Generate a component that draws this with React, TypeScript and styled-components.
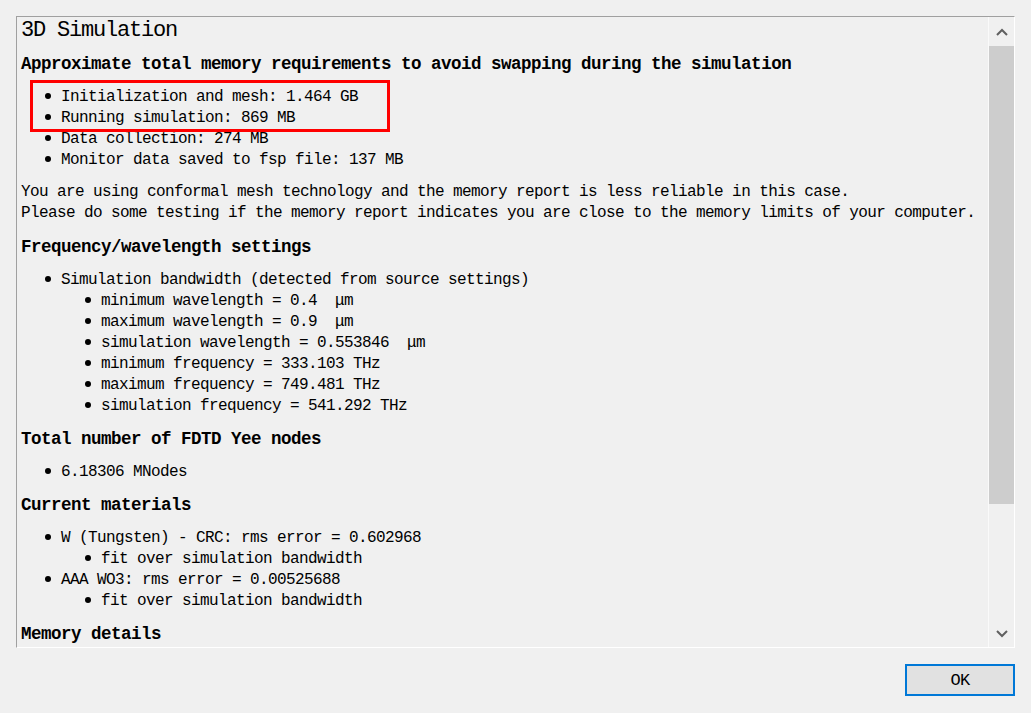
import React from "react";
import styled, { createGlobalStyle } from "styled-components";

const GlobalStyle = createGlobalStyle`
  html, body { margin: 0; padding: 0; background: #f0f0f0; }
  * { box-sizing: border-box; }
`;

const MONO = `"Liberation Mono", "DejaVu Sans Mono", monospace`;

const Dialog = styled.div`
  position: relative;
  width: 1031px;
  height: 713px;
  padding: 16px 16px 0 16px;
  display: flex;
  flex-direction: column;
  background: #f0f0f0;
  font-family: ${MONO};
  color: #000;
`;

const Panel = styled.div`
  height: 632px;
  display: flex;
  border-top: 1px solid #a0a0a0;
  border-left: 1px solid #a0a0a0;
  border-right: 1px solid #ffffff;
  border-bottom: 1px solid #ffffff;
`;

const Content = styled.div`
  flex: 1;
  overflow: hidden;
  padding: 0 0 0 4px;
`;

const Title = styled.h1`
  margin: 0;
  font-size: 22px;
  letter-spacing: -1.2px;
  font-weight: normal;
  line-height: 27px;
  height: 24px;
  white-space: nowrap;
`;

const Heading = styled.h2`
  margin: 12px 0 0 0;
  font-size: 17.5px;
  letter-spacing: -0.5px;
  font-weight: bold;
  line-height: 23px;
  height: 21px;
  white-space: nowrap;
`;

const Para = styled.p`
  margin: 12px 0 0 0;
  font-size: 16px;
  letter-spacing: -0.6px;
  line-height: 21px;
  white-space: pre;
`;

const List = styled.ul<{ $nested?: boolean }>`
  list-style: none;
  margin: ${(p) => (p.$nested ? "0" : "12px 0 0 0")};
  padding: ${(p) => (p.$nested ? "0 0 0 40px" : "0")};
`;

const Row = styled.div`
  display: flex;
  align-items: center;
  height: 21px;
  font-size: 16px;
  letter-spacing: -0.6px;
  white-space: pre;
`;

const Bullet = styled.span`
  width: 40px;
  flex: 0 0 40px;
  display: flex;
  justify-content: flex-end;
  padding-right: 10px;
  &::after {
    content: "";
    width: 6px;
    height: 6px;
    border-radius: 50%;
    background: #000;
    transform: translateY(-1px);
  }
`;

const Scrollbar = styled.div`
  width: 26px;
  display: flex;
  flex-direction: column;
  border-left: 1px solid #fafafa;
`;

const ArrowButton = styled.div<{ $h: number }>`
  height: ${(p) => p.$h}px;
  display: flex;
  align-items: center;
  justify-content: center;
  color: #606060;
`;

const Track = styled.div`
  flex: 1;
`;

const Thumb = styled.div`
  height: 458px;
  background: #cdcdcd;
`;

const Footer = styled.div`
  display: flex;
  justify-content: flex-end;
  margin-top: 16px;
`;

const OkButton = styled.button`
  width: 110px;
  height: 32px;
  background: #e1e1e1;
  border: 2px solid #0078d7;
  font-family: ${MONO};
  font-size: 17px;
  letter-spacing: -0.6px;
  color: #000;
  padding: 0;
`;

const Highlight = styled.div`
  position: absolute;
  left: 30px;
  top: 80px;
  width: 360px;
  height: 52px;
  border: 3px solid #ff0000;
  pointer-events: none;
`;

type Item = { text: string; children?: Item[] };

const BulletList: React.FC<{ items: Item[]; nested?: boolean }> = ({ items, nested }) => (
  <List $nested={nested}>
    {items.map((it, i) => (
      <li key={i}>
        <Row>
          <Bullet />
          {it.text}
        </Row>
        {it.children && <BulletList items={it.children} nested />}
      </li>
    ))}
  </List>
);

const Chevron: React.FC<{ up?: boolean }> = ({ up }) => (
  <svg width="12" height="8" viewBox="0 0 12 8">
    <polyline
      points={up ? "1,7 6,2 11,7" : "1,1 6,6 11,1"}
      fill="none"
      stroke="currentColor"
      strokeWidth="2"
    />
  </svg>
);

export default function App() {
  return (
    <>
      <GlobalStyle />
      <Dialog>
        <Panel>
          <Content>
            <Title>3D Simulation</Title>
            <Heading>Approximate total memory requirements to avoid swapping during the simulation</Heading>
            <BulletList
              items={[
                { text: "Initialization and mesh: 1.464 GB" },
                { text: "Running simulation: 869 MB" },
                { text: "Data collection: 274 MB" },
                { text: "Monitor data saved to fsp file: 137 MB" },
              ]}
            />
            <Para>
              {"You are using conformal mesh technology and the memory report is less reliable in this case.\nPlease do some testing if the memory report indicates you are close to the memory limits of your computer."}
            </Para>
            <Heading>Frequency/wavelength settings</Heading>
            <BulletList
              items={[
                {
                  text: "Simulation bandwidth (detected from source settings)",
                  children: [
                    { text: "minimum wavelength = 0.4  μm" },
                    { text: "maximum wavelength = 0.9  μm" },
                    { text: "simulation wavelength = 0.553846  μm" },
                    { text: "minimum frequency = 333.103 THz" },
                    { text: "maximum frequency = 749.481 THz" },
                    { text: "simulation frequency = 541.292 THz" },
                  ],
                },
              ]}
            />
            <Heading>Total number of FDTD Yee nodes</Heading>
            <BulletList items={[{ text: "6.18306 MNodes" }]} />
            <Heading>Current materials</Heading>
            <BulletList
              items={[
                {
                  text: "W (Tungsten) - CRC: rms error = 0.602968",
                  children: [{ text: "fit over simulation bandwidth" }],
                },
                {
                  text: "AAA WO3: rms error = 0.00525688",
                  children: [{ text: "fit over simulation bandwidth" }],
                },
              ]}
            />
            <Heading>Memory details</Heading>
          </Content>
          <Scrollbar>
            <ArrowButton $h={29}>
              <Chevron up />
            </ArrowButton>
            <Track>
              <Thumb />
            </Track>
            <ArrowButton $h={26}>
              <Chevron />
            </ArrowButton>
          </Scrollbar>
        </Panel>
        <Footer>
          <OkButton>OK</OkButton>
        </Footer>
        <Highlight />
      </Dialog>
    </>
  );
}
